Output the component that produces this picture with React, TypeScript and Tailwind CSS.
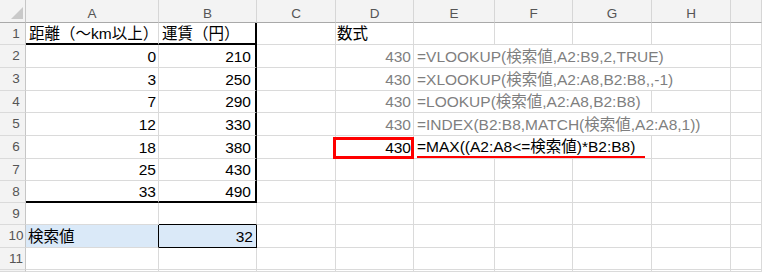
import React from "react";

type Row = {
  n: number;
  a?: string;
  b?: string;
  d?: string;
  e?: string;
  eSpan?: 3 | 4;
  muted?: boolean;
};

const rows: Row[] = [
  { n: 1, a: "距離（〜km以上）", b: "運賃（円）", d: "数式" },
  { n: 2, a: "0", b: "210", d: "430", e: "=VLOOKUP(検索値,A2:B9,2,TRUE)", eSpan: 4, muted: true },
  { n: 3, a: "3", b: "250", d: "430", e: "=XLOOKUP(検索値,A2:A8,B2:B8,,-1)", eSpan: 4, muted: true },
  { n: 4, a: "7", b: "290", d: "430", e: "=LOOKUP(検索値,A2:A8,B2:B8)", eSpan: 3, muted: true },
  { n: 5, a: "12", b: "330", d: "430", e: "=INDEX(B2:B8,MATCH(検索値,A2:A8,1))", eSpan: 4, muted: true },
  { n: 6, a: "18", b: "380", d: "430", e: "=MAX((A2:A8<=検索値)*B2:B8)", eSpan: 3 },
  { n: 7, a: "25", b: "430" },
  { n: 8, a: "33", b: "490" },
  { n: 9 },
  { n: 10, a: "検索値", b: "32" },
  { n: 11 },
  { n: 12 },
];

const columns = ["A", "B", "C", "D", "E", "F", "G", "H", ""];

const base =
  "flex items-center min-w-0 overflow-hidden whitespace-nowrap leading-[19px] text-[15.5px]";
const gridR = "border-r border-r-[#dadada]";
const gridB = "border-b border-b-[#dadada]";

const isNumber = (v?: string) => v !== undefined && v !== "" && !isNaN(Number(v));

function HeaderRow() {
  return (
    <>
      <div className="flex items-end justify-end pr-[2px] pb-[3px] bg-[#f3f3f3] border-r border-r-[#c6c6c6] border-b border-b-[#a9a9a9]">
        <svg width="12" height="12" viewBox="0 0 12 12">
          <polygon points="12,0 12,12 0,12" fill="#c9c9c9" />
        </svg>
      </div>
      {columns.map((c, i) => (
        <div
          key={i}
          className="flex items-center justify-center pt-[6px] leading-[16px] text-[13.5px] text-[#555] bg-[#f3f3f3] border-r border-r-[#d6d6d6] border-b border-b-[#a9a9a9]"
        >
          {c}
        </div>
      ))}
    </>
  );
}

function SheetRow({ row }: { row: Row }) {
  const r = row.n;

  const aRight = r === 10 ? "border-r border-r-black" : gridR;
  const aBottom = r === 1 || r === 8 ? "border-b-2 border-b-black" : gridB;
  const bRight =
    r <= 8 ? "border-r-2 border-r-black" : r === 10 ? "border-r border-r-black" : gridR;
  const bBottom =
    r === 1 || r === 8
      ? "border-b-2 border-b-black"
      : r === 9 || r === 10
      ? "border-b border-b-black"
      : gridB;
  const fill = r === 10 ? "bg-[#dae9f8]" : "";

  const aAlign = isNumber(row.a)
    ? "justify-end pr-[2px]"
    : r === 10
    ? "justify-start pl-[2px]"
    : "justify-start pl-[3px]";
  const bAlign = isNumber(row.b)
    ? r === 10
      ? "justify-end pr-[3px]"
      : "justify-end pr-[4px]"
    : "justify-start pl-[3px]";
  const tone = row.muted ? "text-[#7f7f7f]" : "text-black";
  const dAlign = isNumber(row.d) ? "justify-end pr-[2px]" : "justify-start pl-[1px]";

  const spanClass = row.eSpan === 4 ? "col-span-4" : "col-span-3";

  return (
    <>
      <div className="flex items-center justify-center pl-[7px] leading-[16px] text-[13.5px] text-[#555] bg-[#f3f3f3] border-r border-r-[#c6c6c6] border-b border-b-[#dadada]">
        {r <= 11 ? r : ""}
      </div>
      <div className={`${base} ${aRight} ${aBottom} ${fill} ${aAlign} text-black`}>{row.a}</div>
      <div className={`${base} ${bRight} ${bBottom} ${fill} ${bAlign} text-black`}>{row.b}</div>
      <div className={`${base} ${gridR} ${gridB}`} />
      <div className={`${base} ${gridR} ${gridB} ${dAlign} ${tone}`}>{row.d}</div>
      {row.e ? (
        <div className={`${base} ${spanClass} ${gridR} ${gridB} justify-start pl-[3px] ${tone}`}>
          {r === 6 ? (
            <span className="inline-block leading-[19px] pr-[10px] border-b-2 border-b-[#ff0000]">
              {row.e}
            </span>
          ) : (
            row.e
          )}
        </div>
      ) : (
        <>
          <div className={`${base} ${gridR} ${gridB}`} />
          <div className={`${base} ${gridR} ${gridB}`} />
          <div className={`${base} ${gridR} ${gridB}`} />
        </>
      )}
      {row.eSpan !== 4 && <div className={`${base} ${gridR} ${gridB}`} />}
      <div className={`${base} ${gridR} ${gridB}`} />
    </>
  );
}

export default function App() {
  return (
    <div className="relative w-[762px] h-[272px] overflow-hidden bg-white font-['Liberation_Sans','Noto_Sans_CJK_JP',sans-serif]">
      <div className="grid grid-cols-[26px_133px_98px_79px_78px_81px_78px_79px_79px_31px] grid-rows-[23px_22px_23px_23px_22px_23px_23px_22px_22px_22px_23px_22px_2px]">
        <HeaderRow />
        {rows.map((row) => (
          <SheetRow key={row.n} row={row} />
        ))}
      </div>
      {/* callout frame around D6 */}
      <div className="absolute left-[333px] top-[137px] w-[81px] h-[22px] border-[3px] border-[#ff0000]" />
    </div>
  );
}
